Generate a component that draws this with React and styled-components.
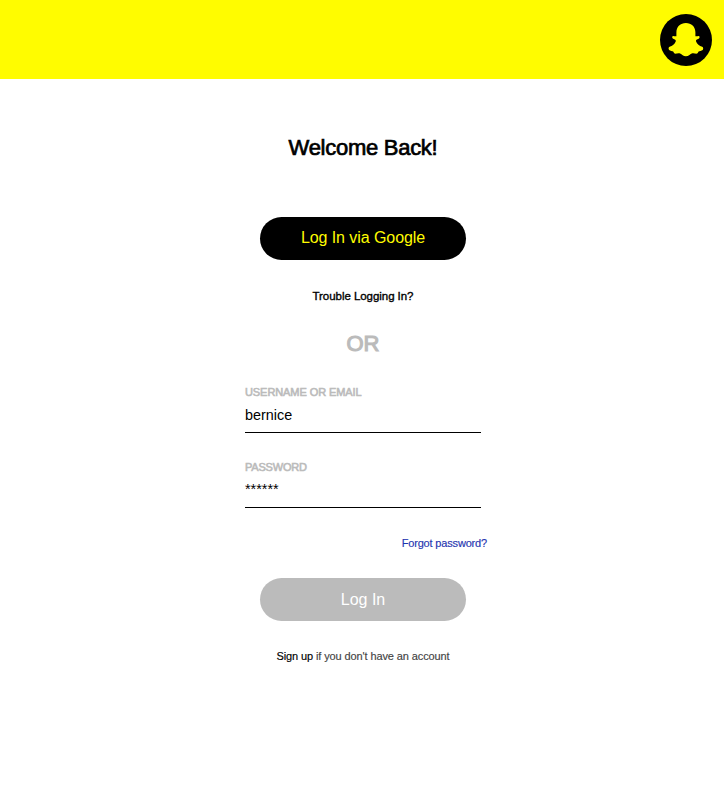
import React from "react";
import styled, { createGlobalStyle } from "styled-components";

const GlobalStyle = createGlobalStyle`
  *, *::before, *::after { box-sizing: border-box; }
  body {
    margin: 0;
    background: #fff;
    color: #000;
    font-family: "Liberation Sans", Arial, Helvetica, sans-serif;
  }
`;

const Page = styled.div`
  min-height: 798px;
  background: #fff;
`;

const Header = styled.header`
  display: flex;
  justify-content: flex-end;
  height: 79px;
  padding: 14px 12px 0 0;
  background: #fffc00;
`;

const Logo = styled.svg`
  display: block;
  width: 52px;
  height: 52px;
`;

const Main = styled.main`
  display: flex;
  flex-direction: column;
  align-items: center;
  width: 236px;
  margin: 0 0 0 245px;
  padding-top: 55px;
`;

const Title = styled.h1`
  margin: 0;
  font-size: 22px;
  font-weight: 400;
  line-height: 28px;
  letter-spacing: -0.27px;
  white-space: nowrap;
  -webkit-text-stroke: 0.7px currentColor;
`;

const PillButton = styled.button`
  width: 206px;
  height: 43px;
  margin-top: ${(p) => p.$gap}px;
  padding: ${(p) => (p.$muted ? "0" : "0 0 2px")};
  border: 0;
  border-radius: 22px;
  background: ${(p) => (p.$muted ? "#bbb" : "#000")};
  color: ${(p) => (p.$muted ? "#fff" : "#fffc00")};
  font: 16px "Liberation Sans", Arial, sans-serif;
  letter-spacing: ${(p) => (p.$muted ? "0" : "-0.07px")};
`;

const Trouble = styled.a`
  margin-top: 28px;
  font-size: 11.5px;
  line-height: 16px;
  letter-spacing: -0.05px;
  -webkit-text-stroke: 0.35px currentColor;
`;

const Divider = styled.div`
  margin-top: 26px;
  color: #bbb;
  font-size: 22px;
  line-height: 28px;
  -webkit-text-stroke: 1.1px currentColor;
`;

const Field = styled.label`
  display: flex;
  flex-direction: column;
  width: 236px;
  margin-top: ${(p) => p.$gap}px;
`;

const FieldName = styled.span`
  color: #bbb;
  font-size: 11px;
  line-height: 14px;
  letter-spacing: ${(p) => p.$tracking}px;
  -webkit-text-stroke: 0.6px currentColor;
`;

const FieldInput = styled.input`
  width: 236px;
  height: 34px;
  padding: 0 0 ${(p) => p.$lift}px;
  border: 0;
  border-bottom: 1px solid #000;
  border-radius: 0;
  outline: 0;
  background: transparent;
  color: #000;
  font: 14.4px "Liberation Sans", Arial, sans-serif;
`;

const Forgot = styled.a`
  align-self: flex-end;
  margin: 28px -6px 0 0;
  color: #1f35b0;
  font-size: 11px;
  line-height: 14px;
  letter-spacing: -0.17px;
  white-space: nowrap;
  -webkit-text-stroke: 0.15px currentColor;
`;

const SignUp = styled.p`
  margin: 28px 0 0;
  color: #444;
  font-size: 11px;
  line-height: 14px;
  letter-spacing: -0.11px;
  white-space: nowrap;
  -webkit-text-stroke: 0.15px currentColor;
`;

const SignUpLink = styled.a`
  color: #000;
`;

function GhostLogo() {
  return (
    <Logo viewBox="0 0 52 52" role="img" aria-label="Snapchat">
      <circle cx="26" cy="26" r="26" fill="#000" />
      <path
        fill="#fffc00"
        d="M25.9 9C20.4 9 16.5 12.6 16.4 18.2V22.2C15.3 22.4 14.2 22 13.2 22C12 22 11.9 23.8 12.8 24.5C13.8 25.3 16.2 25.4 15.8 27.2C14.8 30 12.4 32 9.6 32.8C8.4 33.3 8.3 35 9.1 35.9C10.2 37 12.4 36.7 13.2 37.5C13.9 38.3 13.9 39.4 14.8 39.6C16.4 39.8 18.2 38.8 20.1 39.5C22 40.3 23.2 42.2 25.9 42.2C28.6 42.2 29.8 40.3 31.7 39.5C33.6 38.8 35.4 39.8 37 39.6C37.9 39.4 37.9 38.3 38.6 37.5C39.4 36.7 41.6 37 42.7 35.9C43.5 35 43.4 33.3 42.2 32.8C39.4 32 37 30 36 27.2C35.6 25.4 38 25.3 39 24.5C39.9 23.8 39.8 22 38.6 22C37.6 22 36.5 22.4 35.4 22.2V18.2C35.3 12.6 31.4 9 25.9 9Z"
      />
    </Logo>
  );
}

export default function App() {
  return (
    <>
      <GlobalStyle />
      <Page>
        <Header>
          <GhostLogo />
        </Header>
        <Main>
          <Title>Welcome Back!</Title>
          <PillButton type="button" $gap={55}>Log In via Google</PillButton>
          <Trouble>Trouble Logging In?</Trouble>
          <Divider>OR</Divider>
          <Field $gap={27}>
            <FieldName $tracking={-0.08}>USERNAME OR EMAIL</FieldName>
            <FieldInput $lift={2} defaultValue="bernice" />
          </Field>
          <Field $gap={27}>
            <FieldName $tracking={-0.2}>PASSWORD</FieldName>
            <FieldInput $lift={4} defaultValue="******" />
          </Field>
          <Forgot>Forgot password?</Forgot>
          <PillButton type="button" $muted $gap={28}>Log In</PillButton>
          <SignUp>
            <SignUpLink>Sign up</SignUpLink> if you don't have an account
          </SignUp>
        </Main>
      </Page>
    </>
  );
}
